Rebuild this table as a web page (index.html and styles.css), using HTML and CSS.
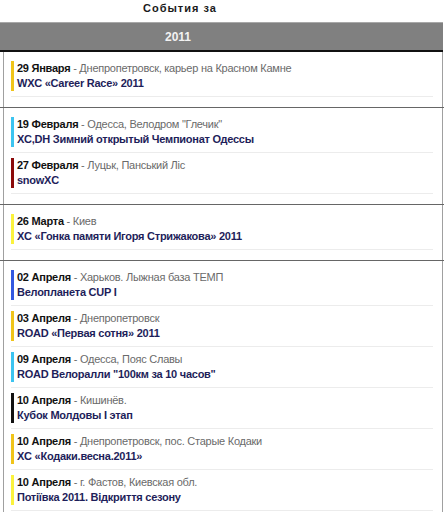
FILE: index.html
```html
<!DOCTYPE html>
<html>
<head>
<meta charset="utf-8">
<link rel="stylesheet" href="styles.css">
</head>
<body>
<div class="page">
  <div class="title"><span>События за</span></div>
  <div class="year-bar"><span>2011</span></div>

  <div class="group">
    <div class="group-inner">
      <div class="item"><div class="item-body c-gold">
        <div class="line1"><b>29 Января</b> - Днепропетровск, карьер на Красном Камне</div>
        <div class="line2">WXC «Career Race» 2011</div>
      </div></div>
    </div>
  </div>

  <div class="group">
    <div class="group-inner">
      <div class="item"><div class="item-body c-sky">
        <div class="line1"><b>19 Февраля</b> - Одесса, Велодром "Глечик"</div>
        <div class="line2">XC,DH Зимний открытый Чемпионат Одессы</div>
      </div></div>
      <div class="item"><div class="item-body c-red">
        <div class="line1"><b>27 Февраля</b> - Луцьк, Панський Ліс</div>
        <div class="line2">snowXC</div>
      </div></div>
    </div>
  </div>

  <div class="group">
    <div class="group-inner">
      <div class="item"><div class="item-body c-yellow">
        <div class="line1"><b>26 Марта</b> - Киев</div>
        <div class="line2">XC «Гонка памяти Игоря Стрижакова» 2011</div>
      </div></div>
    </div>
  </div>

  <div class="group">
    <div class="group-inner">
      <div class="item"><div class="item-body c-blue">
        <div class="line1"><b>02 Апреля</b> - Харьков. Лыжная база ТЕМП</div>
        <div class="line2">Велопланета CUP I</div>
      </div></div>
      <div class="item"><div class="item-body c-gold">
        <div class="line1"><b>03 Апреля</b> - Днепропетровск</div>
        <div class="line2">ROAD «Первая сотня» 2011</div>
      </div></div>
      <div class="item"><div class="item-body c-sky">
        <div class="line1"><b>09 Апреля</b> - Одесса, Пояс Славы</div>
        <div class="line2">ROAD Велоралли "100км за 10 часов"</div>
      </div></div>
      <div class="item"><div class="item-body c-black">
        <div class="line1"><b>10 Апреля</b> - Кишинёв.</div>
        <div class="line2">Кубок Молдовы I этап</div>
      </div></div>
      <div class="item"><div class="item-body c-gold">
        <div class="line1"><b>10 Апреля</b> - Днепропетровск, пос. Старые Кодаки</div>
        <div class="line2">XC «Кодаки.весна.2011»</div>
      </div></div>
      <div class="item"><div class="item-body c-yellow">
        <div class="line1"><b>10 Апреля</b> - г. Фастов, Киевская обл.</div>
        <div class="line2">Потіївка 2011. Відкриття сезону</div>
      </div></div>
    </div>
  </div>
</div>
</body>
</html>
```

FILE: styles.css
```css
html, body {
  margin: 0;
  padding: 0;
  background: #ffffff;
}
body {
  font-family: "Liberation Sans", Arial, sans-serif;
  font-size: 11px;
  color: #111;
}
.page {
  width: 444px;
}
.title {
  height: 22px;
  display: flex;
  padding-left: 143px;
  padding-top: 1px;
  box-sizing: border-box;
}
.title span {
  font-weight: bold;
  font-size: 11px;
  letter-spacing: 1px;
  line-height: 14px;
  color: #1a1a1a;
}
.year-bar {
  height: 30px;
  box-sizing: border-box;
  background: #808080;
  border-top: 1px solid #a8a8a8;
  border-bottom: 2px solid #111;
  display: flex;
  align-items: center;
  padding-left: 165px;
  margin-right: 1px;
}
.year-bar span {
  color: #f2f2f2;
  font-weight: bold;
  font-size: 12px;
}
.group {
  border-bottom: 1px solid #666;
}
.group-inner {
  margin-left: 3px;
  margin-right: 1px;
  border-left: 1px solid #a0a0a0;
  border-right: 1px solid #a0a0a0;
  padding: 4px 0 10px;
}
.item {
  margin: 0 9px 0 7px;
  padding: 5px 0 5px;
  border-bottom: 1px solid #ececec;
}
.item-body {
  border-left: 3px solid #e8c020;
  padding-left: 3px;
  line-height: 15px;
  letter-spacing: -0.25px;
}
.line1 {
  color: #6a6a6a;
  white-space: nowrap;
}
.line1 b {
  color: #111;
}
.line2 {
  font-weight: bold;
  color: #1e1e5a;
  white-space: nowrap;
}
.c-gold { border-left-color: #f0c419; }
.c-sky { border-left-color: #3cc4f0; }
.c-red { border-left-color: #8b0a0a; }
.c-yellow { border-left-color: #fbf23c; }
.c-blue { border-left-color: #3358e0; }
.c-black { border-left-color: #111; }
```
